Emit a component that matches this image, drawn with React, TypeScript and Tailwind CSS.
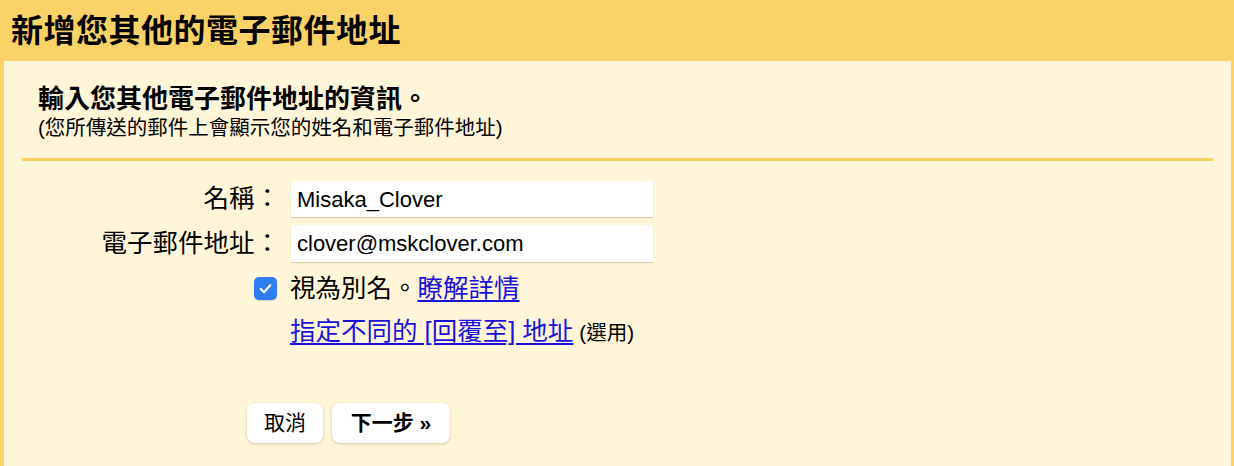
const font = {
  fontFamily: '"Liberation Sans", "Noto Sans CJK TC", sans-serif',
};

function CheckBox() {
  return (
    <span className="flex h-[23px] w-[23px] items-center justify-center rounded-[5px] bg-[#2f7df3] shadow-[0_1px_1px_rgba(0,0,0,0.15)]">
      <svg viewBox="0 0 16 16" className="h-[15px] w-[15px]" fill="none">
        <path d="M3 8.5 6.5 12 13 4.5" stroke="#fff" strokeWidth="2.4" strokeLinecap="round" strokeLinejoin="round" />
      </svg>
    </span>
  );
}

export default function App() {
  return (
    <div className="flex h-[466px] w-[1234px] flex-col text-black" style={font}>
      <div className="flex h-[61px] items-center bg-[#f9d367] px-[11px]">
        <h1 className="text-[32px] leading-none font-bold tracking-[0.5px]">新增您其他的電子郵件地址</h1>
      </div>

      <div className="flex-1 border-l-4 border-r-[3px] border-[#f9d367] bg-[#fff6da]">
        <div className="mx-[18px] border-b-[3px] border-[#f9d062] pt-[22px] pb-[17px] pl-4">
          <div className="text-[26px] leading-[32px] font-bold">輸入您其他電子郵件地址的資訊。</div>
          <div className="text-[20.5px] leading-[26px]">(您所傳送的郵件上會顯示您的姓名和電子郵件地址)</div>
        </div>

        <div className="mt-[20px] flex flex-col gap-[8px]">
          <div className="flex items-center">
            <label className="w-[276px] text-right text-[25.5px] leading-none">名稱：</label>
            <div className="ml-[11px] flex h-[36px] w-[362px] items-center bg-white pl-[6px] text-[22px] shadow-[0_1px_1px_rgba(120,100,40,0.25)]">
              Misaka_Clover
            </div>
          </div>
          <div className="flex items-center">
            <label className="w-[276px] text-right text-[25.5px] leading-none">電子郵件地址：</label>
            <div className="ml-[11px] flex h-[37px] w-[362px] items-center bg-white pl-[6px] text-[22px] shadow-[0_1px_1px_rgba(120,100,40,0.25)]">
              clover@mskclover.com
            </div>
          </div>
        </div>

        <div className="mt-[10px] flex h-[32px] items-center">
          <div className="flex w-[273px] justify-end">
            <CheckBox />
          </div>
          <div className="ml-[13px] text-[25.5px] leading-[32px]">
            視為別名。
            <a className="text-[#1a12dc] underline underline-offset-[3px]">瞭解詳情</a>
          </div>
        </div>

        <div className="mt-[11px] flex h-[32px] items-baseline pl-[286px]">
          <a className="text-[25.5px] leading-[32px] text-[#1a12dc] underline underline-offset-[3px]">指定不同的 [回覆至] 地址</a>
          <span className="ml-[6px] text-[20.5px]">(選用)</span>
        </div>

        <div className="mt-[56px] flex gap-[9px] pl-[243px]">
          <button className="h-[40px] w-[76px] rounded-[8px] bg-white text-[21px] shadow-[0_1px_3px_rgba(120,100,40,0.35)]">
            取消
          </button>
          <button className="h-[40px] w-[118px] rounded-[8px] bg-white text-[21px] font-bold shadow-[0_1px_3px_rgba(120,100,40,0.35)]">
            下一步 »
          </button>
        </div>
      </div>
    </div>
  );
}
